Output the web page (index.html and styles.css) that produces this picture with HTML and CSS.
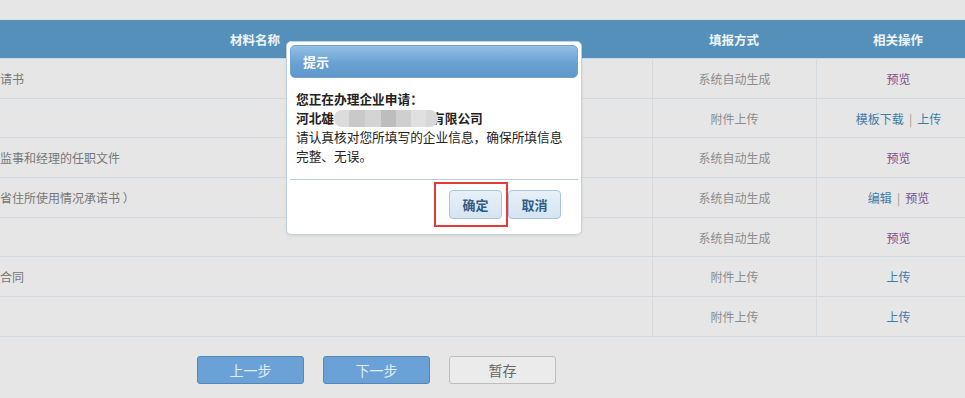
FILE: index.html
```html
<!DOCTYPE html>
<html lang="zh-CN">
<head>
<meta charset="utf-8">
<title>材料清单</title>
<link rel="stylesheet" href="styles.css">
</head>
<body>
<div class="page">
  <div class="grid">
    <div class="thead">
      <div class="cell c1">材料名称</div>
      <div class="cell c2">填报方式</div>
      <div class="cell c3">相关操作</div>
    </div>
    <div class="row">
      <div class="cell c1">请书</div>
      <div class="cell c2">系统自动生成</div>
      <div class="cell c3"><a class="link purple">预览</a></div>
    </div>
    <div class="row">
      <div class="cell c1"></div>
      <div class="cell c2">附件上传</div>
      <div class="cell c3"><a class="link">模板下载</a><span class="sep">|</span><a class="link">上传</a></div>
    </div>
    <div class="row">
      <div class="cell c1">监事和经理的任职文件</div>
      <div class="cell c2">系统自动生成</div>
      <div class="cell c3"><a class="link purple">预览</a></div>
    </div>
    <div class="row">
      <div class="cell c1 shift">省住所使用情况承诺书 ）</div>
      <div class="cell c2">系统自动生成</div>
      <div class="cell c3"><a class="link">编辑</a><span class="sep">|</span><a class="link purple">预览</a></div>
    </div>
    <div class="row">
      <div class="cell c1"></div>
      <div class="cell c2">系统自动生成</div>
      <div class="cell c3"><a class="link purple">预览</a></div>
    </div>
    <div class="row">
      <div class="cell c1 shift2">合同</div>
      <div class="cell c2">附件上传</div>
      <div class="cell c3"><a class="link">上传</a></div>
    </div>
    <div class="row">
      <div class="cell c1"></div>
      <div class="cell c2">附件上传</div>
      <div class="cell c3"><a class="link">上传</a></div>
    </div>
  </div>
  <div class="actions">
    <button class="btn btn-primary">上一步</button>
    <button class="btn btn-primary">下一步</button>
    <button class="btn btn-default">暂存</button>
  </div>
</div>

<div class="dialog">
  <div class="dialog-title">提示</div>
  <div class="dialog-body">
    <div class="strong">您正在办理企业申请：</div>
    <div class="strong">河北雄<span class="blur"></span>有限公司</div>
    <div>请认真核对您所填写的企业信息，确保所填信息完整、无误。</div>
  </div>
  <div class="dialog-footer">
    <button class="dbtn">确定</button>
    <button class="dbtn">取消</button>
  </div>
</div>
<div class="highlight"></div>
</body>
</html>
```

FILE: styles.css
```css
* { box-sizing: border-box; }
html, body { margin: 0; padding: 0; overflow: hidden; }
body {
  width: 965px;
  height: 398px;
  background: #e6e6e6;
  font-family: "Noto Sans CJK SC", "Microsoft YaHei", sans-serif;
  position: relative;
}
.page { padding-top: 19px; }
.grid { margin-left: -142px; width: 1122px; }
.thead {
  display: flex;
  height: 40px;
  background: #5590bb;
  border-top: 1px solid #d9e3ea;
  border-bottom: 1px solid #c9d8e3;
  color: #eef4f8;
  font-weight: bold;
  font-size: 12.5px;
}
.cell { display: flex; align-items: center; justify-content: center; }
.c1 { width: 794px; }
.c2 { width: 164px; }
.c3 { width: 164px; }
.row {
  display: flex;
  height: 39.7px;
  border-bottom: 1px solid #d1d9de;
  font-size: 12px;
}
.row .c1 { justify-content: flex-start; padding-left: 142px; color: #777; white-space: pre; }
.row .c1.shift { padding-left: 142px; }
.row .c1.shift2 { padding-left: 142px; }
.row .c2 { border-left: 1px solid #d3d9dd; color: #8c8c8c; }
.row .c3 { border-left: 1px solid #d3d9dd; }
.link { color: #3d7cab; text-decoration: none; }
.link.purple { color: #7a4e92; }
.sep { color: #9a9a9a; margin: 0 5px; }

.actions {
  display: flex;
  gap: 19px;
  padding-left: 197px;
  margin-top: 19px;
}
.btn {
  width: 107px;
  height: 28px;
  border-radius: 3px;
  font-family: inherit;
  font-size: 14px;
  padding: 0;
}
.btn-primary { background: #6aa1d6; border: 1px solid #5387b9; color: #e3eef8; }
.btn-default { background: #ebebeb; border: 1px solid #bdbdbd; color: #666; }

.dialog {
  position: absolute;
  left: 286px;
  top: 41px;
  width: 296px;
  height: 194px;
  background: #fff;
  border: 1px solid #bfd2e0;
  border-radius: 5px;
  padding: 3px;
  box-shadow: 0 1px 3px rgba(0, 0, 0, 0.08);
}
.dialog-title {
  height: 33px;
  border-radius: 5px;
  border: 1px solid #74a4cf;
  background: linear-gradient(#93c0e5, #6aa1d2 55%, #5e98cb);
  color: #fff;
  font-weight: bold;
  font-size: 13px;
  display: flex;
  align-items: center;
  padding-left: 12px;
}
.dialog-body {
  padding: 11px 8px 14px 6px;
  font-size: 12.7px;
  line-height: 19px;
  color: #222;
}
.strong { font-weight: bold; }
.blur {
  display: inline-block;
  width: 104px;
  height: 17px;
  vertical-align: -4px;
  margin-right: -6px;
  position: relative;
  border-radius: 8px;
  background: linear-gradient(90deg, #dcdcdc 0 14%, #c9c9c9 14% 30%, #d4d4d4 30% 45%, #bdbdbd 45% 60%, #cfcfcf 60% 74%, #e0e0e0 74% 88%, #d8d8d8 88% 100%);
}
.dialog-footer {
  border-top: 1px solid #b8cfe1;
  display: flex;
  justify-content: flex-end;
  gap: 6px;
  padding: 10px 17px 0 0;
}
.dbtn {
  width: 53px;
  height: 29px;
  border-radius: 4px;
  border: 1px solid #aac6dd;
  background: linear-gradient(#e8f0f8, #d5e4f1);
  color: #2f5d86;
  font-family: inherit;
  font-weight: bold;
  font-size: 13px;
  padding: 0;
}
.highlight {
  position: absolute;
  left: 434px;
  top: 182px;
  width: 74px;
  height: 45px;
  border: 2px solid #e33b36;
}
```
